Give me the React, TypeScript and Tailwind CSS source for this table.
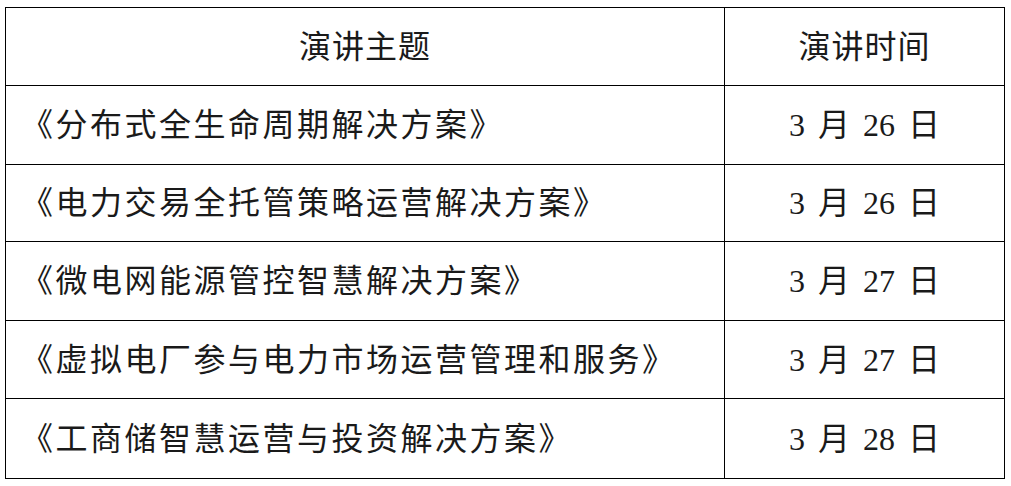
const rows = [
  { topic: '《分布式全生命周期解决方案》', date: '3 月 26 日' },
  { topic: '《电力交易全托管策略运营解决方案》', date: '3 月 26 日' },
  { topic: '《微电网能源管控智慧解决方案》', date: '3 月 27 日' },
  { topic: '《虚拟电厂参与电力市场运营管理和服务》', date: '3 月 27 日' },
  { topic: '《工商储智慧运营与投资解决方案》', date: '3 月 28 日' },
];

export default function App() {
  return (
    <div className="w-[1011px] h-[486px] bg-white pl-[5px] pt-[7px] font-['Liberation_Serif','Noto_Sans_CJK_SC',serif] text-[32px] text-[#1a1a1a]">
      <div className="grid w-[1000px] grid-cols-[719px_1fr] grid-rows-[78px_79px_77px_79px_78px_79px] border border-black">
        <div className="flex items-center justify-center border-r border-b border-black tracking-[1px]">
          演讲主题
        </div>
        <div className="flex items-center justify-center border-b border-black tracking-[1px]">
          演讲时间
        </div>
        {rows.map((r, i) => (
          <div key={i} className="contents">
            <div
              className={`flex items-center pl-[15px] border-r border-black tracking-[2.5px] ${
                i < rows.length - 1 ? 'border-b' : ''
              }`}
            >
              {r.topic}
            </div>
            <div
              className={`flex items-center justify-center border-black whitespace-pre [word-spacing:5px] ${
                i < rows.length - 1 ? 'border-b' : ''
              }`}
            >
              {r.date}
            </div>
          </div>
        ))}
      </div>
    </div>
  );
}
